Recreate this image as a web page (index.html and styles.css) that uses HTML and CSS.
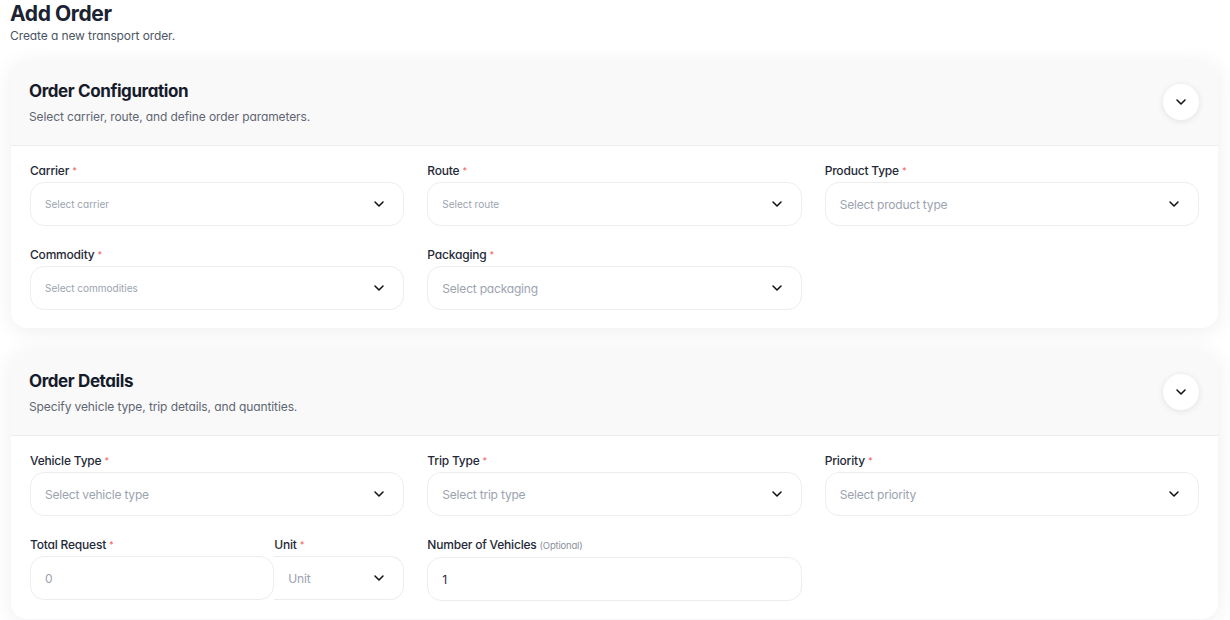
FILE: index.html
```html
<!DOCTYPE html>
<html lang="en">
<head>
  <meta charset="UTF-8" />
  <title>Add Order</title>
  <link rel="stylesheet" href="styles.css">
</head>
<body>
  <h1>Add Order</h1>
  <p class="page-sub">Create a new transport order.</p>

  <div class="card">
    <div class="card-head">
      <div>
        <h2>Order Configuration</h2>
        <p>Select carrier, route, and define order parameters.</p>
      </div>
      <button class="toggle"><svg viewBox="0 0 24 24"><path d="M6 9l6 6 6-6"/></svg></button>
    </div>
    <div class="card-body">
      <div class="field">
        <label>Carrier <span class="req">*</span></label>
        <div class="select small"><span>Select carrier</span><svg viewBox="0 0 24 24"><path d="M6 9l6 6 6-6"/></svg></div>
      </div>
      <div class="field">
        <label>Route <span class="req">*</span></label>
        <div class="select small"><span>Select route</span><svg viewBox="0 0 24 24"><path d="M6 9l6 6 6-6"/></svg></div>
      </div>
      <div class="field">
        <label>Product Type <span class="req">*</span></label>
        <div class="select"><span>Select product type</span><svg viewBox="0 0 24 24"><path d="M6 9l6 6 6-6"/></svg></div>
      </div>
      <div class="field">
        <label>Commodity <span class="req">*</span></label>
        <div class="select small"><span>Select commodities</span><svg viewBox="0 0 24 24"><path d="M6 9l6 6 6-6"/></svg></div>
      </div>
      <div class="field">
        <label>Packaging <span class="req">*</span></label>
        <div class="select"><span>Select packaging</span><svg viewBox="0 0 24 24"><path d="M6 9l6 6 6-6"/></svg></div>
      </div>
    </div>
  </div>

  <div class="card">
    <div class="card-head">
      <div>
        <h2>Order Details</h2>
        <p>Specify vehicle type, trip details, and quantities.</p>
      </div>
      <button class="toggle"><svg viewBox="0 0 24 24"><path d="M6 9l6 6 6-6"/></svg></button>
    </div>
    <div class="card-body">
      <div class="field">
        <label>Vehicle Type <span class="req">*</span></label>
        <div class="select"><span>Select vehicle type</span><svg viewBox="0 0 24 24"><path d="M6 9l6 6 6-6"/></svg></div>
      </div>
      <div class="field">
        <label>Trip Type <span class="req">*</span></label>
        <div class="select"><span>Select trip type</span><svg viewBox="0 0 24 24"><path d="M6 9l6 6 6-6"/></svg></div>
      </div>
      <div class="field">
        <label>Priority <span class="req">*</span></label>
        <div class="select"><span>Select priority</span><svg viewBox="0 0 24 24"><path d="M6 9l6 6 6-6"/></svg></div>
      </div>
      <div class="field split">
        <div class="field grow">
          <label>Total Request <span class="req">*</span></label>
          <input type="text" placeholder="0" class="input">
        </div>
        <div class="field unit">
          <label>Unit <span class="req">*</span></label>
          <div class="select joined"><span>Unit</span><svg viewBox="0 0 24 24"><path d="M6 9l6 6 6-6"/></svg></div>
        </div>
      </div>
      <div class="field">
        <label>Number of Vehicles <span class="opt">(Optional)</span></label>
        <input type="text" value="1" class="input">
      </div>
    </div>
  </div>
</body>
</html>
```

FILE: styles.css
```css
* { box-sizing: border-box; }
body { margin: 0; padding: 0 12px 0 11px; background: #fff; font-family: Inter, "Noto Sans", sans-serif; font-feature-settings: "cv11"; color: #1f2937; }
h1 { margin: 0 0 0 -1px; padding-top: 1px; font-size: 21px; line-height: 26px; font-weight: 700; color: #1b2232; letter-spacing: -0.4px; }
.page-sub { margin: 1px 0 18px -1px; font-size: 12px; line-height: 15px; color: #4b5563; letter-spacing: -0.1px; }

.card { background: #fff; border-radius: 16px; box-shadow: 0 3px 22px rgba(0,0,0,0.07); margin-bottom: 23px; overflow: hidden; }
.card-head { display: flex; justify-content: space-between; align-items: center; background: #f9f9f9; padding: 18px 19px 20px 18px; border-bottom: 1px solid #ececec; }
.card-head h2 { margin: 0; font-size: 17px; line-height: 24px; font-weight: 700; color: #161b2b; letter-spacing: -0.4px; }
.card-head p { margin: 6px 0 0; font-size: 12px; line-height: 16px; color: #5f6672; letter-spacing: -0.1px; }
.toggle { width: 36px; height: 36px; border-radius: 50%; border: none; background: #fff; box-shadow: 0 1px 6px rgba(0,0,0,0.1); display: flex; align-items: center; justify-content: center; padding: 0; }
.toggle svg, .select svg { width: 16px; height: 16px; fill: none; stroke: #111; stroke-width: 2.3; stroke-linecap: round; stroke-linejoin: round; }

.card-body { display: grid; grid-template-columns: repeat(3, 1fr); column-gap: 23px; row-gap: 21px; padding: 17px 19px 18px; }
.field { display: flex; flex-direction: column; min-width: 0; }
.field label { font-size: 12px; line-height: 16px; font-weight: 500; color: #1f2937; margin-bottom: 3px; letter-spacing: -0.2px; white-space: nowrap; }
.req { color: #f26d6d; font-size: 9px; vertical-align: top; }
.opt { color: #8a909a; font-size: 9.5px; font-weight: 400; }

.select { height: 44px; border: 1px solid #ededed; border-radius: 14px; display: flex; align-items: center; justify-content: space-between; padding: 0 16px 0 14px; font-size: 12px; color: #9ca3af; letter-spacing: -0.2px; }
.select.small { font-size: 10px; letter-spacing: 0; }
.input { height: 44px; width: 100%; border: 1px solid #ededed; border-radius: 14px; padding: 0 14px; font-family: inherit; font-size: 12px; color: #1f2937; outline: none; }
.input::placeholder { color: #9ca3af; }

.split { flex-direction: row; }
.split .grow { flex: 1; }
.split .unit { width: 130px; }
.select.joined { border-left: none; border-radius: 0 14px 14px 0; }
```
